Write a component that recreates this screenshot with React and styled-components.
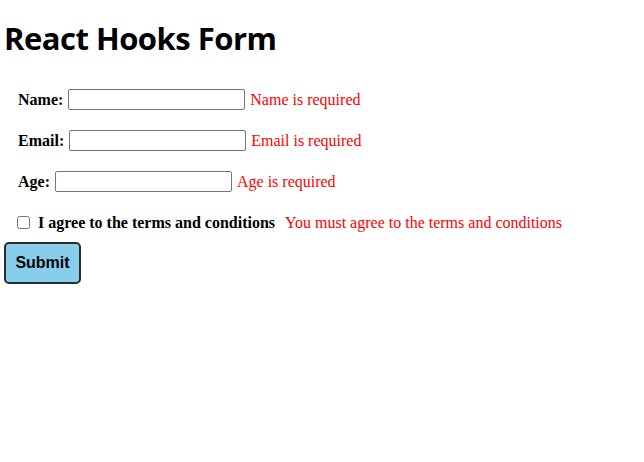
import React from 'react';
import styled, { createGlobalStyle } from 'styled-components';

const GlobalStyle = createGlobalStyle`
  body {
    margin: 0;
    background: #fff;
    font-family: "Liberation Serif", "Times New Roman", serif;
    font-size: 16px;
    color: #000;
  }
`;

const Page = styled.div`
  padding: 0 4px;
`;

const Title = styled.h1`
  font-family: "Open Sans", "Noto Sans", sans-serif;
  font-weight: 700;
  font-size: 31px;
  letter-spacing: -0.5px;
  line-height: 40px;
  margin: 18px 0 0;
`;

const Form = styled.form`
  display: flex;
  flex-direction: column;
  align-items: flex-start;
  margin-top: 31px;
`;

const Row = styled.div`
  display: flex;
  align-items: center;
  height: 21px;
  margin-bottom: 20px;
  padding-left: ${p => (p.$check ? '9px' : '14px')};

  &:last-of-type {
    margin-bottom: 9px;
  }
`;

const Label = styled.label`
  font-weight: 700;
  margin-right: 5px;
`;

const Input = styled.input`
  box-sizing: border-box;
  width: 177px;
  height: 21px;
  border: 1px solid #767676;
  border-radius: 2px;
  padding: 1px 2px;
  margin: 0;
  font-size: 13px;
`;

const Check = styled.input`
  width: 13px;
  height: 13px;
  margin: 0 8px 0 4px;
`;

const Error = styled.span`
  color: #ff0000;
  margin-left: 5px;
`;

const Submit = styled.button`
  font-family: "Liberation Sans", Arial, sans-serif;
  font-weight: 700;
  font-size: 16px;
  color: #000;
  background: #87ceeb;
  border: 2px solid #2b2b2b;
  border-radius: 5px;
  width: 77px;
  height: 42px;
  padding: 0;
  cursor: pointer;
`;

const fields = [
  { id: 'name', label: 'Name:', error: 'Name is required' },
  { id: 'email', label: 'Email:', error: 'Email is required' },
  { id: 'age', label: 'Age:', error: 'Age is required' },
];

function App() {
  return (
    <Page>
      <GlobalStyle />
      <Title>React Hooks Form</Title>
      <Form onSubmit={e => e.preventDefault()}>
        {fields.map(f => (
          <Row key={f.id}>
            <Label htmlFor={f.id}>{f.label}</Label>
            <Input id={f.id} type="text" />
            <Error>{f.error}</Error>
          </Row>
        ))}
        <Row $check>
          <Check id="terms" type="checkbox" />
          <Label htmlFor="terms">I agree to the terms and conditions</Label>
          <Error>You must agree to the terms and conditions</Error>
        </Row>
        <Submit type="submit">Submit</Submit>
      </Form>
    </Page>
  );
}

export default App;
